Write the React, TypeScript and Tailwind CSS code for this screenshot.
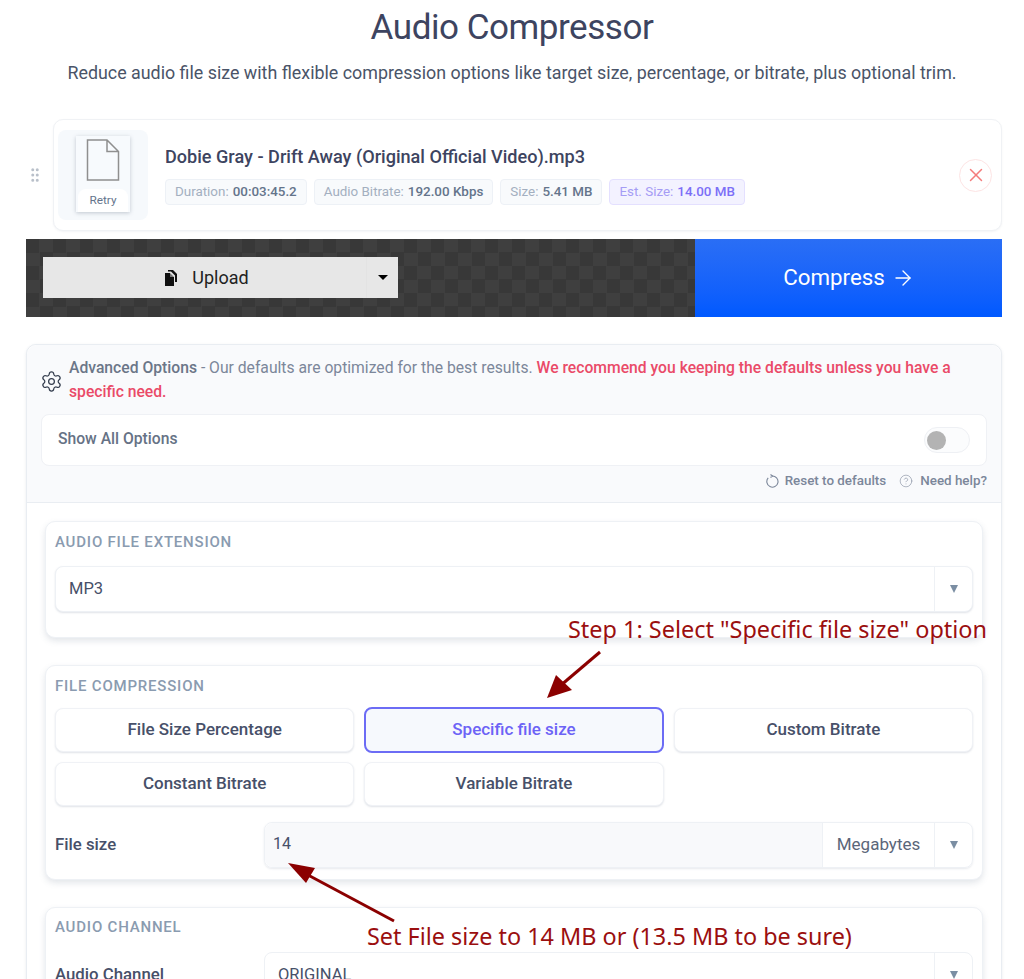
import { ArrowRight, CircleHelp, GripVertical, Settings, X } from "lucide-react";

const Chip = ({ label, value, accent }: { label: string; value: string; accent?: boolean }) => (
  <span
    className={
      accent
        ? "flex h-[26px] items-center gap-1 rounded border border-[#e4e0ff] bg-[#f3f2ff] px-[9px] text-[13.4px] text-[#a59cf5]"
        : "flex h-[26px] items-center gap-1 rounded border border-[#edf1f6] bg-[#f8fafc] px-[9px] text-[13.4px] text-[#a3afc0]"
    }
  >
    {label}
    <b className={accent ? "font-medium text-[#7c6ff7]" : "font-medium text-[#64748b]"}>{value}</b>
  </span>
);

const Caret = () => (
  <div className="flex w-[38px] shrink-0 items-center justify-center border-l border-[#eef1f5]">
    <span className="border-x-[4px] border-t-[8px] border-x-transparent border-t-[#7b8ea3]" />
  </div>
);

const Card = ({ title, children, className }: { title: string; children: React.ReactNode; className: string }) => (
  <section className={`rounded-[10px] border border-[#eef1f5] bg-white px-[9px] shadow-[0_3px_6px_rgba(100,116,139,0.18)] ${className}`}>
    <h3 className="text-[15px] leading-none font-medium tracking-[0.8px] text-[#8a9bb0]">{title}</h3>
    {children}
  </section>
);

const Option = ({ label, active }: { label: string; active?: boolean }) => (
  <button
    className={
      active
        ? "-my-px h-[46px] rounded-lg border-2 border-[#6c6cf5] bg-[#f6f9fd] text-[17px] font-medium text-[#6c63f6]"
        : "h-[44px] rounded-lg border border-[#f0f2f6] bg-white text-[17px] font-medium text-[#475069] shadow-[0_1px_2px_rgba(100,116,139,0.2)]"
    }
  >
    {label}
  </button>
);

export default function App() {
  return (
    <div className="relative h-[979px] overflow-hidden bg-white font-['Roboto',sans-serif]">
      <h1 className="pt-[6px] text-center text-[35px] leading-[44px] tracking-[-0.45px] text-[#3d4460]">Audio Compressor</h1>
      <p className="mt-[11px] text-center text-[17.85px] leading-6 text-[#4a5468]">
        Reduce audio file size with flexible compression options like target size, percentage, or bitrate, plus optional trim.
      </p>

      <div className="mt-[34px] mr-[22px] ml-[26px]">
        <div className="flex items-center">
          <div className="flex w-[27px] justify-center pr-[9px]">
            <GripVertical size={18} className="text-[#b9c0ca]" strokeWidth={2} />
          </div>
          <div className="flex h-[112px] flex-1 items-center rounded-[10px] border border-[#f0f2f5] bg-white pr-[9px] pl-[4px] shadow-[0_1px_2px_rgba(100,116,139,0.08)]">
            <div className="flex h-[90px] w-[90px] shrink-0 justify-center rounded-lg bg-[#f6f9fc] pt-[6px]">
              <div className="flex h-[76px] w-[54px] flex-col items-center bg-[#f7fafd] shadow-[0_1px_4px_rgba(71,85,105,0.3)]">
                <svg width="34" height="44" viewBox="0 0 34 44" className="mt-[3px]" fill="none" stroke="#8f8f8f" strokeWidth="1.5">
                  <path d="M1.5 1h19.5l11.5 11.5V41H1.5zM21 1v11.5h11.5" />
                </svg>
                <span className="mt-[6px] flex h-[23px] w-[50px] items-center justify-center rounded-t-lg bg-white text-[11.8px] text-[#64748b]">Retry</span>
              </div>
            </div>
            <div className="ml-[17px] flex-1">
              <h2 className="text-[18.1px] leading-6 font-medium text-[#3d4460]">Dobie Gray - Drift Away (Original Official Video).mp3</h2>
              <div className="mt-[10px] flex gap-[7px]">
                <Chip label="Duration:" value="00:03:45.2" />
                <Chip label="Audio Bitrate:" value="192.00 Kbps" />
                <Chip label="Size:" value="5.41 MB" />
                <Chip label="Est. Size:" value="14.00 MB" accent />
              </div>
            </div>
            <div className="flex h-[33px] w-[33px] items-center justify-center rounded-full border border-[#fde4e4] bg-white">
              <X size={22} strokeWidth={1.6} className="text-[#f47c7c]" />
            </div>
          </div>
        </div>

        <div className="mt-[8px] flex h-[78px] bg-[repeating-conic-gradient(#3f3f3f_0_25%,#383838_0_50%)] bg-[length:27px_27px]">
          <div className="flex flex-1 items-center pb-px pl-[17px]">
            <div className="flex h-[41px] w-[355px] bg-[#e7e7e7]">
              <div className="flex flex-1 items-center justify-center gap-[14px] pl-[4px] text-[18px] text-[#222]">
                <svg width="14" height="16" viewBox="0 0 14 16" fill="#111">
                  <path d="M4 0h5l4 4v8H11V5.5L7 1.5H4z" />
                  <path d="M1 3h5v4h4v9H1z" />
                  <path d="M6 3l4 4H6z" fill="#777" />
                </svg>
                Upload
              </div>
              <div className="flex w-[32px] items-center justify-center border-l border-[#e3e3e3]">
                <span className="border-x-[5px] border-t-[5px] border-x-transparent border-t-black" />
              </div>
            </div>
          </div>
          <div className="flex w-[307px] items-center justify-center gap-[6px] bg-gradient-to-b from-[#2a6ef5] to-[#0059ff] pl-px text-[22.3px] text-white">
            Compress
            <ArrowRight size={24} strokeWidth={1.4} />
          </div>
        </div>

        <div className="mt-[27px] h-[700px] rounded-t-[10px] border border-[#e9edf2] bg-white shadow-[0_1px_3px_rgba(100,116,139,0.15)]">
          <div className="h-[158px] rounded-t-[10px] border-b border-[#e9edf2] bg-[#f9fafc] px-[14px] pt-[11px]">
            <div className="flex items-center gap-[6px]">
              <Settings size={23} strokeWidth={1.3} className="mt-[3px] -ml-px shrink-0 text-[#333c4d]" />
              <p className="text-[15.7px] leading-6 text-[#7c879a]">
                <b className="font-medium text-[#6b7688]">Advanced Options</b> - Our defaults are optimized for the best results.{" "}
                <b className="font-medium text-[#ea4a68]">We recommend you keeping the defaults unless you have a specific need.</b>
              </p>
            </div>
            <div className="mt-[10px] flex h-[52px] items-center justify-between rounded-lg border border-[#eff1f5] bg-white px-[16px]">
              <span className="-mt-[2px] text-[15.7px] font-medium text-[#667285]">Show All Options</span>
              <span className="flex h-[26px] w-[46px] items-center rounded-full border border-[#eef0f4] bg-[#fbfcfd] pl-[2px]">
                <span className="h-[19px] w-[19px] rounded-full bg-[#b3b3b3]" />
              </span>
            </div>
            <div className="mt-[5px] flex justify-end gap-[13px] text-[13.4px] font-medium text-[#7c879a]">
              <span className="flex items-center gap-[6px]">
                <svg width="14" height="14" viewBox="0 0 14 14" fill="none" stroke="currentColor" strokeWidth="1.1">
                  <path d="M3.2 3.9A5.6 5.6 0 1 0 7 2" />
                  <path d="M5.5 .5L7.5 2L5.5 3.5" />
                </svg>
                Reset to defaults
              </span>
              <span className="flex items-center gap-[7px]">
                <CircleHelp size={14} strokeWidth={1} />
                Need help?
              </span>
            </div>
          </div>

          <div className="px-[18px] pt-[18px]">
            <Card title="AUDIO FILE EXTENSION" className="h-[117px] pt-[13px]">
              <div className="mt-[16px] flex h-[46px] rounded-lg border border-[#eef1f5] bg-white shadow-[0_1px_2px_rgba(100,116,139,0.2)]">
                <span className="flex flex-1 items-center pl-[13px] text-[16.5px] text-[#475069]">MP3</span>
                <Caret />
              </div>
            </Card>

            <Card title="FILE COMPRESSION" className="mt-[27px] h-[215px] pt-[13px]">
              <div className="mt-[14px] grid grid-cols-3 gap-x-[10px] gap-y-[10px]">
                <Option label="File Size Percentage" />
                <Option label="Specific file size" active />
                <Option label="Custom Bitrate" />
                <Option label="Constant Bitrate" />
                <Option label="Variable Bitrate" />
              </div>
              <div className="mt-[16px] flex items-center">
                <span className="w-[209px] text-[16.8px] font-medium text-[#475069]">File size</span>
                <div className="flex h-[46px] flex-1 rounded-lg border border-[#eef1f5] shadow-[0_1px_2px_rgba(100,116,139,0.15)]">
                  <span className="flex-1 rounded-l-lg bg-[#f8f9fb] pt-[9px] pl-[8px] text-[16px] text-[#475069]">14</span>
                  <span className="flex w-[112px] items-center justify-center border-l border-[#eef1f5] text-[17px] text-[#5b6679]">Megabytes</span>
                  <Caret />
                </div>
              </div>
            </Card>

            <Card title="AUDIO CHANNEL" className="mt-[27px] h-[150px] pt-[12px]">
              <div className="mt-[17px] flex items-center">
                <span className="w-[209px] text-[16.8px] font-medium text-[#475069]">Audio Channel</span>
                <div className="flex h-[46px] flex-1 rounded-lg border border-[#eef1f5] bg-white">
                  <span className="flex flex-1 items-center pl-[13px] text-[16.5px] text-[#475069]">ORIGINAL</span>
                  <Caret />
                </div>
              </div>
            </Card>
          </div>
        </div>
      </div>

      {/* annotations drawn over the page */}
      <span className="absolute top-[613px] left-[568px] font-['Noto_Sans',sans-serif] text-[23.45px] leading-8 whitespace-nowrap text-[#9b0f0f]">
        Step 1: Select "Specific file size" option
      </span>
      <span className="absolute top-[920px] left-[367px] font-['Noto_Sans',sans-serif] text-[23.4px] leading-8 whitespace-nowrap text-[#9b0f0f]">
        Set File size to 14 MB or (13.5 MB to be sure)
      </span>
      <svg className="pointer-events-none absolute top-0 left-0" width="1024" height="979" fill="none">
        <path d="M600 652L560 686" stroke="#8b0000" strokeWidth="3" />
        <path d="M547 698L556 675L572 690Z" fill="#8b0000" />
        <path d="M394 921L308 875" stroke="#8b0000" strokeWidth="3" />
        <path d="M288 863L315 868L306 883Z" fill="#8b0000" />
      </svg>
    </div>
  );
}
